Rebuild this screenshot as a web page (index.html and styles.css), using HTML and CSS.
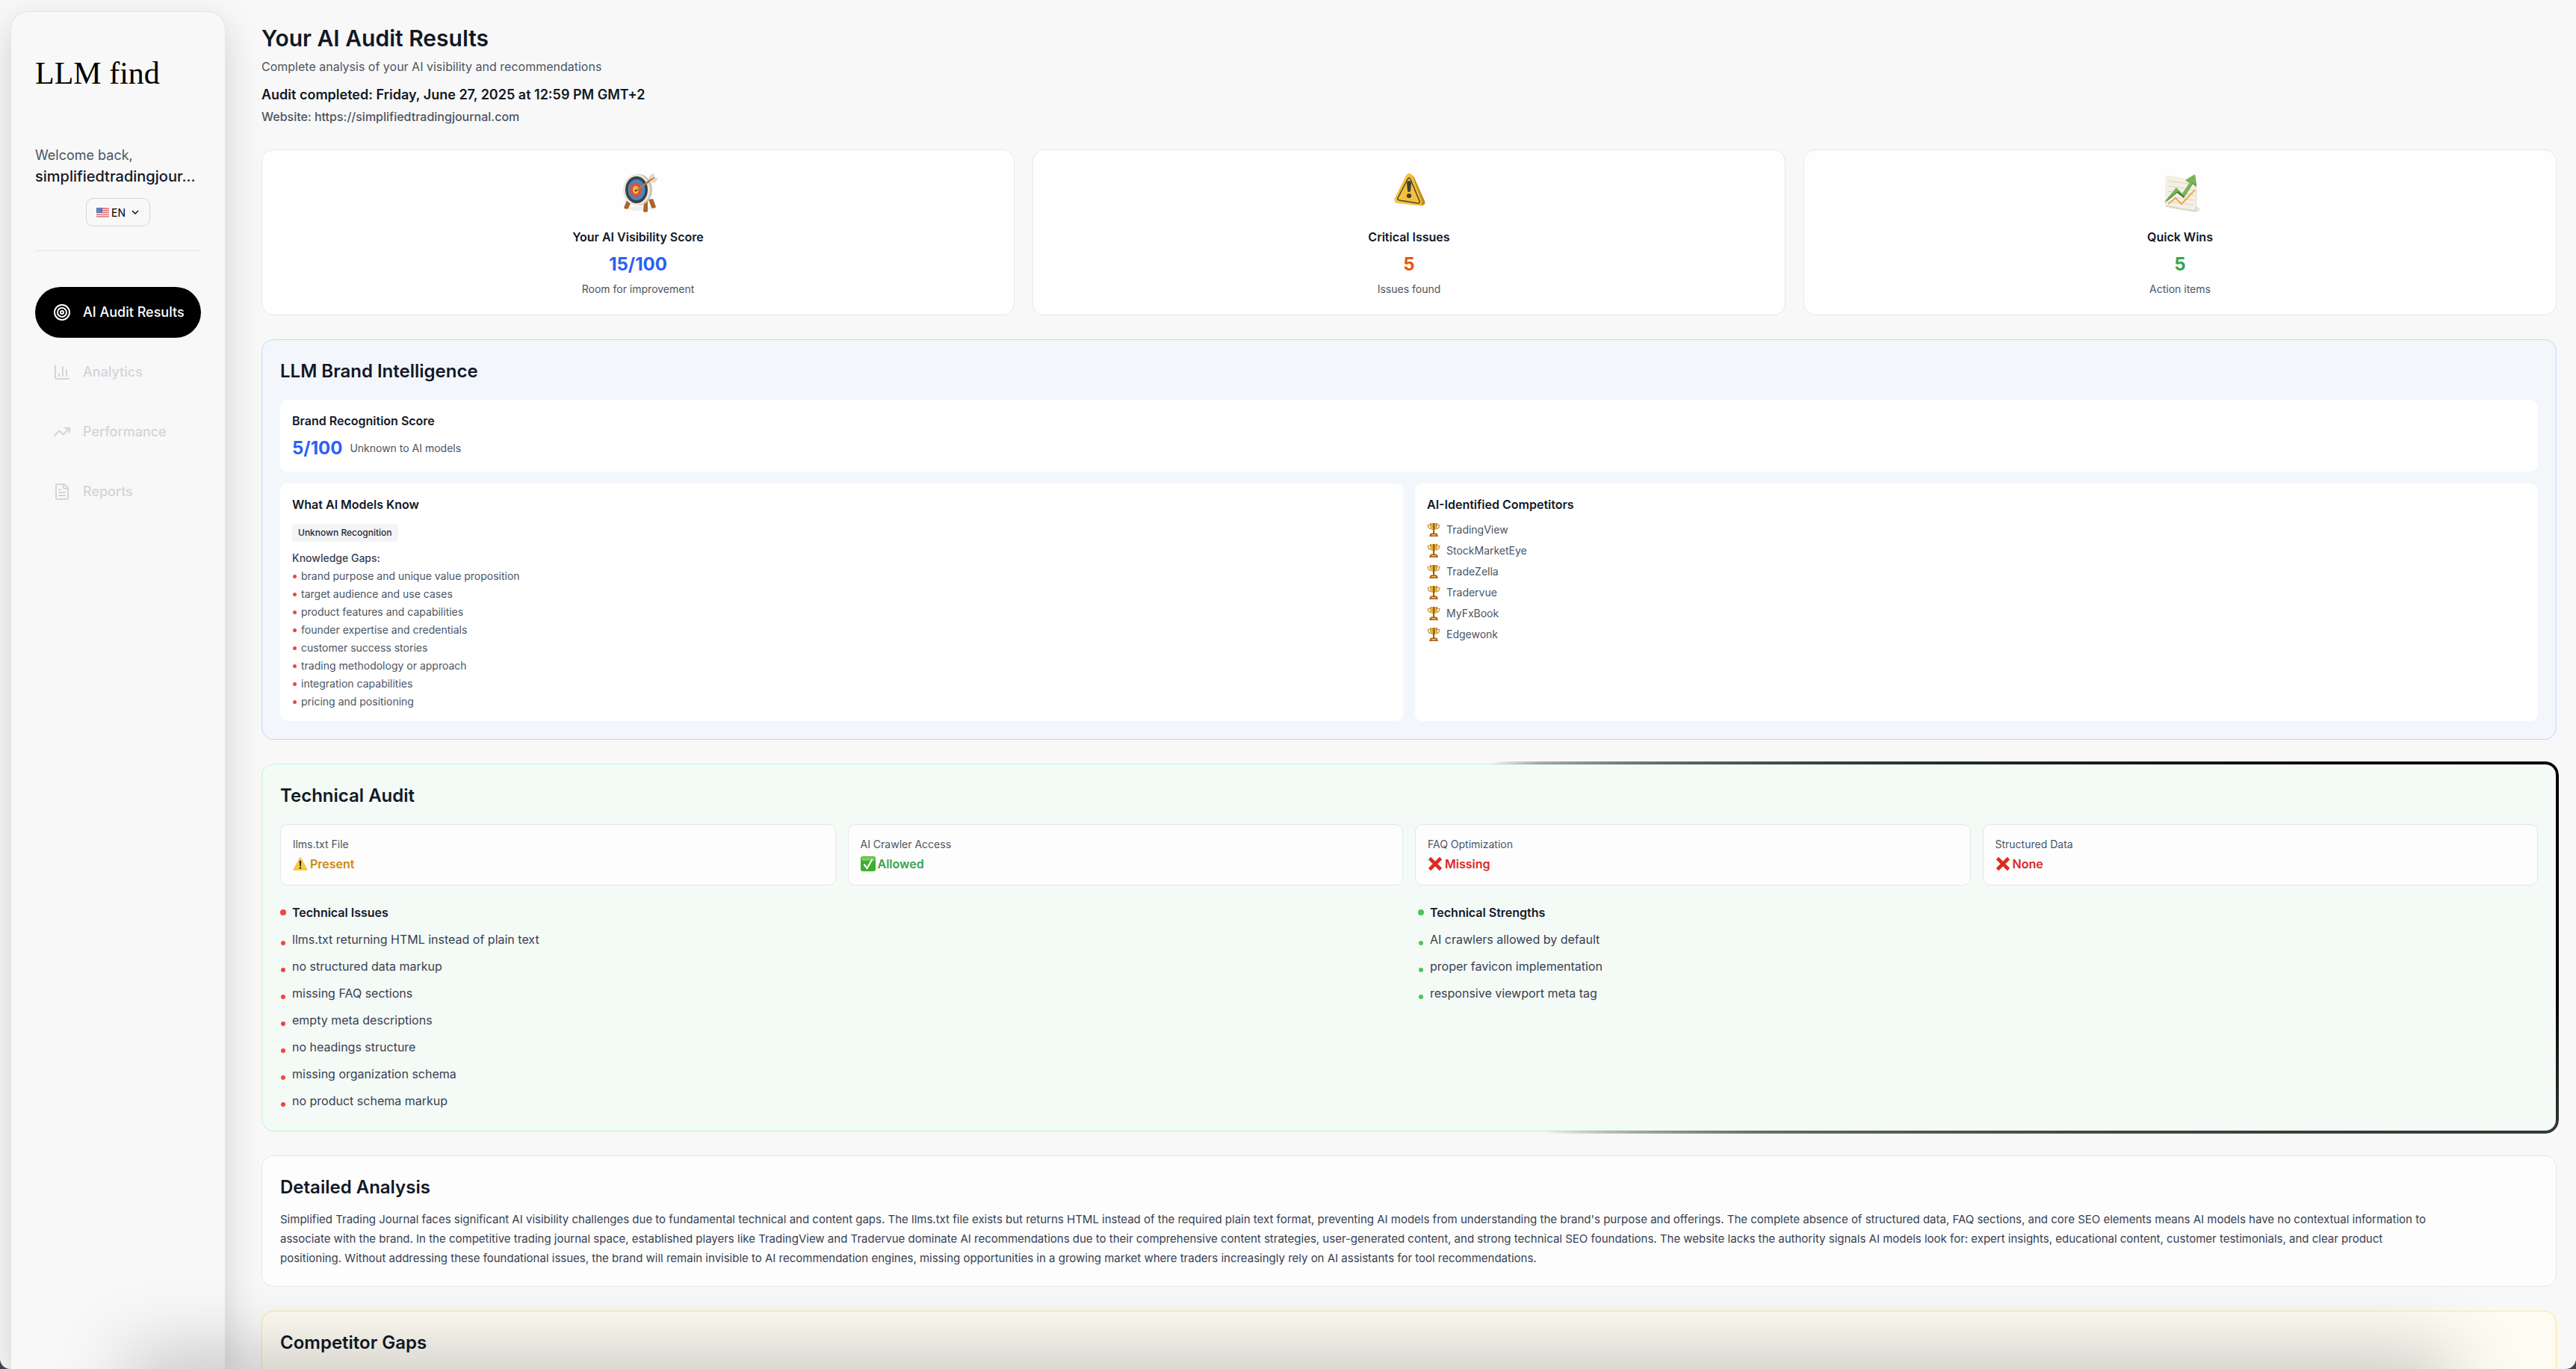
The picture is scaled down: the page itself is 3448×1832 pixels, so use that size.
FILE: index.html
```html
<!DOCTYPE html>
<html lang="en">
<head>
    <meta charset="UTF-8">
    <meta name="viewport" content="width=device-width, initial-scale=1">
    <title>LLM find - AI Audit Results</title>
    <link rel="stylesheet" href="styles.css">
</head>
<body>
    <!-- shared drawings -->
    <svg class="sprite" aria-hidden="true">
        <defs>
            <linearGradient id="gold" x1="0" x2="1">
                <stop offset="0" stop-color="#b9770f"/>
                <stop offset=".3" stop-color="#f6cf58"/>
                <stop offset=".5" stop-color="#7a4a08"/>
                <stop offset=".75" stop-color="#f2bd3c"/>
                <stop offset="1" stop-color="#a8650c"/>
            </linearGradient>
            <linearGradient id="sign" x1="0" y1="0" x2="0" y2="1">
                <stop offset="0" stop-color="#f7d679"/>
                <stop offset="1" stop-color="#f9c626"/>
            </linearGradient>
        </defs>
        <symbol id="trophy" viewBox="0 0 18 18">
            <path d="M4.500 2.500H1.200C1.200 6 3 7.500 6.500 8M13.500 2.500h3.300C16.800 6 15 7.500 11.500 8" fill="none" stroke="#c8912c" stroke-width="1.200"/>
            <path d="M4 0h10c0 5-1 8-4 9.500V13h2.500l.5 2H5l.5-2H8V9.500C5 8 4 5 4 0z" fill="url(#gold)"/>
            <path d="M4.500 14h9l1.500 4H3z" fill="#a95f1c"/>
            <path d="M6 15h6v1.500H6z" fill="#f0c45a"/>
        </symbol>
        <symbol id="cross" viewBox="0 0 20 20">
            <path d="M2.500 2.500l15 15M17.500 2.500l-15 15" stroke="#dc2c20" stroke-width="4.600"/>
        </symbol>
    </svg>

    <aside class="sidebar">
        <div class="logo">LLM find</div>
        <div class="welcome">Welcome back,</div>
        <div class="username">simplifiedtradingjour...</div>
        <div class="language">
            <svg class="flag" viewBox="0 0 17 13" aria-hidden="true">
                <rect width="17" height="13" rx="1" fill="#f3e6e8"/>
                <path d="M0 1h17M0 3.700h17M0 6.400h17M0 9.100h17M0 11.800h17" stroke="#e2636b" stroke-width="1.300"/>
                <rect width="8" height="7" fill="#4a6fb5"/>
                <path d="M1 1.500h6M1 3.500h6M1 5.500h6" stroke="#c9d6ee" stroke-width=".7" stroke-dasharray="1 1"/>
            </svg>
            <select class="language-select" aria-label="Language">
                <option>EN</option>
            </select>
            <svg class="chevron" viewBox="0 0 24 24" aria-hidden="true"><path d="m4 8 8 8 8-8"/></svg>
        </div>
        <nav class="nav">
            <a class="nav-item active" href="#">
                <svg class="icon" viewBox="0 0 24 24"><circle cx="12" cy="12" r="10"/><circle cx="12" cy="12" r="6"/><circle cx="12" cy="12" r="2"/></svg>
                AI Audit Results
            </a>
            <a class="nav-item" href="#">
                <svg class="icon" viewBox="0 0 24 24"><path d="M3 3v16a2 2 0 0 0 2 2h16"/><path d="M18 17V9"/><path d="M13 17V5"/><path d="M8 17v-3"/></svg>
                Analytics
            </a>
            <a class="nav-item" href="#">
                <svg class="icon" viewBox="0 0 24 24"><path d="M22 7l-8.500 8.500-5-5L2 17"/><path d="M16 7h6v6"/></svg>
                Performance
            </a>
            <a class="nav-item" href="#">
                <svg class="icon" viewBox="0 0 24 24"><path d="M15 2H6a2 2 0 0 0-2 2v16a2 2 0 0 0 2 2h12a2 2 0 0 0 2-2V7Z"/><path d="M14 2v4a2 2 0 0 0 2 2h4"/><path d="M10 9H8"/><path d="M16 13H8"/><path d="M16 17H8"/></svg>
                Reports
            </a>
        </nav>
    </aside>

    <main class="main">
        <h1>Your AI Audit Results</h1>
        <p class="subtitle">Complete analysis of your AI visibility and recommendations</p>
        <p class="completed">Audit completed: Friday, June 27, 2025 at 12:59 PM GMT+2</p>
        <p class="website">Website: https://simplifiedtradingjournal.com</p>

        <div class="stats">
            <div class="stat">
                <svg class="stat-icon" viewBox="0 0 64 64" aria-hidden="true">
                    <g transform="translate(5 -4)">
                        <ellipse cx="30" cy="58" rx="17" ry="3" fill="#eeeeec"/>
                        <path d="M12 47l-4 10q2 3 6 1l4-9zM35 49l-1 13q3 2 6 0V48zM41 46l4 11q4 2 6-1l-4-11z" fill="#a8662c"/>
                        <ellipse cx="28" cy="33" rx="18" ry="21" fill="#c9c3b6"/>
                        <ellipse cx="25" cy="33" rx="18" ry="21" fill="#ece7dc"/>
                        <ellipse cx="25" cy="33" rx="15" ry="18" fill="#3b4247"/>
                        <ellipse cx="25" cy="33" rx="11.500" ry="14" fill="#4588c6"/>
                        <ellipse cx="24" cy="33" rx="8" ry="10" fill="#d9523e"/>
                        <ellipse cx="24" cy="33" rx="4" ry="5.500" fill="#f0be45"/>
                        <path d="M25 34l24-18" stroke="#bb7a36" stroke-width="2.500"/>
                        <path d="M41 19l2-6 6-2-1 6zM46 21l4-4 4 1-4 5-6 1z" fill="#ded9cf"/>
                        <circle cx="24" cy="34" r="1.500" fill="#6a4a1e"/>
                    </g>
                </svg>
                <h3>Your AI Visibility Score</h3>
                <div class="score blue">15/100</div>
                <p>Room for improvement</p>
            </div>
            <div class="stat">
                <svg class="stat-icon" viewBox="0 0 64 64" aria-hidden="true">
                    <path d="M34 8q4 2 6 7l13 29q2 6-5 6l-5-1z" fill="#c48b1a"/>
                    <path d="M33 7q-4 0-6 5L13 40q-2 6 4 7l27 3q7 0 5-6L37 12q-2-5-4-5z" fill="#f4c13c"/>
                    <path d="M32 13q-1 0-2 2L17 40q-1 2 2 3l25 4q3 0 2-3L34 15q-1-2-2-2z" fill="none" stroke="#4b4636" stroke-width="1.500"/>
                    <path d="M29 20q0-3 3-3t3 3l-1 11q-2 2-4 0z" fill="#3f3d38"/>
                    <ellipse cx="32" cy="37" rx="3.200" ry="3" fill="#3f3d38"/>
                </svg>
                <h3>Critical Issues</h3>
                <div class="score orange">5</div>
                <p>Issues found</p>
            </div>
            <div class="stat">
                <svg class="stat-icon" viewBox="0 0 64 64" aria-hidden="true">
                    <path d="M16 53l36 6q8-1 6-5l-5-4z" fill="#e6e4e1"/>
                    <path d="M15 10q-2-1-2 2l-1 37q0 3 3 3l36 6q3 0 3-3V19q0-3-3-3z" fill="#dcd6c5"/>
                    <path d="M15 10q-2-1-2 2l-1 35q0 3 3 3l35 6q3 0 3-3V19q0-3-3-3z" fill="#f4f0e4"/>
                    <path d="M16 17l34 5M16 24l34 5M16 31l34 5M16 38l34 5M16 45l34 4" stroke="#d8d3c4" stroke-width="1"/>
                    <path d="M16 48l10-8 8 8 18-19" fill="none" stroke="#efa94a" stroke-width="2"/>
                    <path d="M11 47l16-20 8 8 11-15-6-3 12-8 2 16-5-4-12 19-9-7z" fill="#3f7a33"/>
                    <path d="M11 45l16-19 8 8 10-15-6-3 13-8 1 15-4-3-11 18-9-7z" fill="#79b552"/>
                </svg>
                <h3>Quick Wins</h3>
                <div class="score green">5</div>
                <p>Action items</p>
            </div>
        </div>

        <section class="panel panel-blue">
            <h2>LLM Brand Intelligence</h2>
            <div class="box">
                <h3>Brand Recognition Score</h3>
                <div class="recognition">
                    <span class="score blue">5/100</span>
                    <span class="small">Unknown to AI models</span>
                </div>
            </div>
            <div class="box-row">
                <div class="box">
                    <h3>What AI Models Know</h3>
                    <div class="badge">Unknown Recognition</div>
                    <div class="gaps-title">Knowledge Gaps:</div>
                    <ul class="gaps">
                        <li>brand purpose and unique value proposition</li>
                        <li>target audience and use cases</li>
                        <li>product features and capabilities</li>
                        <li>founder expertise and credentials</li>
                        <li>customer success stories</li>
                        <li>trading methodology or approach</li>
                        <li>integration capabilities</li>
                        <li>pricing and positioning</li>
                    </ul>
                </div>
                <div class="box">
                    <h3>AI-Identified Competitors</h3>
                    <ul class="competitors">
                        <li><svg class="trophy"><use href="#trophy"/></svg>TradingView</li>
                        <li><svg class="trophy"><use href="#trophy"/></svg>StockMarketEye</li>
                        <li><svg class="trophy"><use href="#trophy"/></svg>TradeZella</li>
                        <li><svg class="trophy"><use href="#trophy"/></svg>Tradervue</li>
                        <li><svg class="trophy"><use href="#trophy"/></svg>MyFxBook</li>
                        <li><svg class="trophy"><use href="#trophy"/></svg>Edgewonk</li>
                    </ul>
                </div>
            </div>
        </section>

        <section class="panel panel-green">
            <h2>Technical Audit</h2>
            <div class="checks">
                <div class="check">
                    <div class="small">llms.txt File</div>
                    <div class="check-value yellow">
                        <svg class="mark" viewBox="0 0 20 20"><path d="M10 1.500L19 18H1z" fill="url(#sign)" stroke="#f3c544" stroke-width="1.500" stroke-linejoin="round"/><path d="M9 6h2l-.4 7H9.400z" fill="#222" stroke="#222" stroke-width=".6"/><circle cx="10" cy="15.500" r="1.200" fill="#222"/></svg>
                        Present
                    </div>
                </div>
                <div class="check">
                    <div class="small">AI Crawler Access</div>
                    <div class="check-value green">
                        <svg class="mark" viewBox="0 0 20 20"><rect width="20" height="20" rx="3" fill="#3fae2d"/><rect x="1" y="1" width="18" height="5" rx="2" fill="#74cf5c"/><path d="M4.500 10.500l4 5.500L15.500 4" fill="none" stroke="#fff" stroke-width="2.200"/></svg>
                        Allowed
                    </div>
                </div>
                <div class="check">
                    <div class="small">FAQ Optimization</div>
                    <div class="check-value red">
                        <svg class="mark"><use href="#cross"/></svg>
                        Missing
                    </div>
                </div>
                <div class="check">
                    <div class="small">Structured Data</div>
                    <div class="check-value red">
                        <svg class="mark"><use href="#cross"/></svg>
                        None
                    </div>
                </div>
            </div>
            <div class="findings">
                <div class="finding issues">
                    <h3>Technical Issues</h3>
                    <ul>
                        <li>llms.txt returning HTML instead of plain text</li>
                        <li>no structured data markup</li>
                        <li>missing FAQ sections</li>
                        <li>empty meta descriptions</li>
                        <li>no headings structure</li>
                        <li>missing organization schema</li>
                        <li>no product schema markup</li>
                    </ul>
                </div>
                <div class="finding strengths">
                    <h3>Technical Strengths</h3>
                    <ul>
                        <li>AI crawlers allowed by default</li>
                        <li>proper favicon implementation</li>
                        <li>responsive viewport meta tag</li>
                    </ul>
                </div>
            </div>
        </section>

        <section class="panel panel-plain">
            <h2>Detailed Analysis</h2>
            <p class="analysis">Simplified Trading Journal faces significant AI visibility challenges due to fundamental technical and content gaps. The llms.txt file exists but returns HTML instead of the required plain text format, preventing AI models from understanding the brand's purpose and offerings. The complete absence of structured data, FAQ sections, and core SEO elements means AI models have no contextual information to<br>
            associate with the brand. In the competitive trading journal space, established players like TradingView and Tradervue dominate AI recommendations due to their comprehensive content strategies, user-generated content, and strong technical SEO foundations. The website lacks the authority signals AI models look for: expert insights, educational content, customer testimonials, and clear product<br>
            positioning. Without addressing these foundational issues, the brand will remain invisible to AI recommendation engines, missing opportunities in a growing market where traders increasingly rely on AI assistants for tool recommendations.</p>
        </section>

        <section class="panel panel-yellow">
            <h2>Competitor Gaps</h2>
        </section>
    </main>
    <div class="bottom-shade"></div>
    <div class="corner"></div>
</body>
</html>
```

FILE: styles.css
```css
* {
    box-sizing: border-box;
}

body {
    margin: 0;
    height: 100vh;
    display: flex;
    overflow: hidden;
    background: #f8f8f8;
    font-family: Inter, "Liberation Sans", sans-serif;
    font-size: 16px;
    line-height: 24px;
    color: #111827;
}

h1, h2, h3, p, ul {
    margin: 0;
    padding: 0;
}

ul {
    list-style: none;
}

h1 {
    font-size: 30px;
    line-height: 36px;
    font-weight: 600;
}

h2 {
    font-size: 24px;
    line-height: 36px;
    font-weight: 600;
    margin-bottom: 20px;
}

h3 {
    font-size: 16px;
    font-weight: 600;
}

.sprite {
    position: absolute;
    width: 0;
    height: 0;
}

/* sidebar */
.sidebar {
    flex: none;
    width: 288px;
    margin: 15px 48px 0 14px;
    padding: 54px 32px 0;
    border: 1px solid #e5e5e5;
    border-bottom: 0;
    border-radius: 24px 24px 0 0;
    background: #f8f8f8;
    box-shadow: 0 16px 48px rgba(0, 0, 0, .16);
}

.logo {
    font-family: "Liberation Serif", serif;
    font-size: 42px;
    line-height: 56px;
    color: #000;
    margin-bottom: 68px;
}

.welcome,
.username {
    line-height: 28px;
    white-space: nowrap;
}

.welcome {
    font-size: 18px;
    color: #4b5563;
}

.username {
    font-size: 20px;
    font-weight: 500;
}

.language {
    width: 86px;
    height: 38px;
    margin: 15px auto 32px;
    padding: 0 13px;
    display: flex;
    align-items: center;
    gap: 3px;
    border: 1px solid #d1d5db;
    border-radius: 10px;
}

.flag {
    flex: none;
    width: 17px;
    height: 13px;
}

.language-select {
    flex: 1;
    min-width: 0;
    padding: 0;
    border: 0;
    appearance: none;
    background: none;
    font-family: inherit;
    font-size: 14px;
    color: #000;
}

.chevron {
    flex: none;
    width: 12px;
    height: 12px;
    fill: none;
    stroke: #111;
    stroke-width: 3;
}

.nav {
    display: flex;
    flex-direction: column;
    gap: 12px;
    padding-top: 48px;
    border-top: 1px solid #e5e7eb;
}

.nav-item {
    display: flex;
    align-items: center;
    gap: 16px;
    height: 68px;
    padding: 0 24px;
    border-radius: 34px;
    font-size: 18px;
    font-weight: 500;
    color: #d1d5db;
    text-decoration: none;
    white-space: nowrap;
}

.nav-item.active {
    background: #000;
    color: #fff;
}

.icon {
    flex: none;
    width: 24px;
    height: 24px;
    fill: none;
    stroke: currentColor;
    stroke-width: 2;
    stroke-linecap: round;
    stroke-linejoin: round;
}

/* main column */
.main {
    flex: 1;
    min-width: 0;
    padding: 33px 26px 0 0;
}

.subtitle {
    margin-top: 8px;
    color: #4b5563;
}

.completed {
    margin-top: 12px;
    font-size: 18px;
    line-height: 28px;
    font-weight: 600;
}

.website {
    margin: 3px 0 32px;
    font-weight: 500;
    color: #4b5563;
}

.stats {
    display: grid;
    grid-template-columns: repeat(3, 1fr);
    gap: 24px;
}

.stat {
    padding: 24px;
    border: 1px solid #e5e7eb;
    border-radius: 16px;
    background: #fefefe;
    text-align: center;
}

.stat-icon {
    display: block;
    width: 64px;
    height: 64px;
    margin: 0 auto 16px;
}

.stat .score {
    margin: 8px 0 6px;
}

.stat p,
.small {
    font-size: 14px;
    line-height: 20px;
    color: #4b5563;
}

.score {
    font-size: 24px;
    line-height: 34px;
    font-weight: 700;
}

.blue { color: #2b5ff6; }
.orange { color: #e8550c; }
.green { color: #36a44b; }
.yellow { color: #cb8a0a; }
.red { color: #dc2626; }

/* panels */
.panel {
    position: relative;
    margin-top: 32px;
    padding: 24px;
    border: 1px solid #e5e7eb;
    border-radius: 16px;
}

.panel-blue {
    background: #f3f6fb;
    border-color: #bfdbfe;
}

.panel-green {
    background: #f4faf6;
    border-color: #bbf7d0;
}

.panel-plain {
    background: #fdfdfd;
}

.panel-yellow {
    height: 240px;
    background: #fdfbf2;
    border-color: #fde68a;
}

/* dark light running round the right half of the border */
.panel-green::after {
    content: "";
    position: absolute;
    inset: -4px;
    padding: 4px;
    border-radius: 18px;
    background: conic-gradient(
        transparent 24deg,
        rgba(0, 0, 0, .3) 35deg,
        rgba(0, 0, 0, .68) 62deg,
        #000 82deg,
        #000 92deg,
        rgba(0, 0, 0, .78) 99deg,
        rgba(0, 0, 0, .55) 118deg,
        transparent 144deg
    );
    mask: linear-gradient(#000 0 0) content-box exclude, linear-gradient(#000 0 0);
    pointer-events: none;
}

.box {
    padding: 16px;
    border-radius: 10px;
    background: #fff;
}

.recognition {
    display: flex;
    align-items: center;
    gap: 10px;
    margin-top: 8px;
    margin-bottom: -2px;
}

.box-row {
    display: grid;
    grid-template-columns: 1fr 1fr;
    gap: 16px;
    margin-top: 16px;
}

.badge {
    width: fit-content;
    margin: 14px 0 12px;
    padding: 4px 8px;
    border-radius: 4px;
    background: #f3f4f6;
    font-size: 12px;
    line-height: 16px;
    font-weight: 500;
    color: #1f2937;
}

.gaps-title {
    font-size: 14px;
    line-height: 20px;
    font-weight: 500;
    color: #374151;
}

.gaps li {
    display: flex;
    align-items: center;
    gap: 6px;
    margin-top: 4px;
    padding-left: 1px;
    font-size: 14px;
    line-height: 20px;
    color: #4b5563;
}

.gaps li::before {
    content: "";
    width: 5px;
    height: 5px;
    border-radius: 50%;
    background: #ef4444;
}

.competitors {
    display: grid;
    gap: 8px;
    margin-top: 12px;
}

.competitors li {
    display: flex;
    align-items: center;
    gap: 8px;
    font-size: 14px;
    line-height: 20px;
    color: #4b5563;
}

.trophy {
    width: 18px;
    height: 18px;
}

/* technical audit */
.checks {
    display: grid;
    grid-template-columns: repeat(4, 1fr);
    gap: 16px;
}

.check {
    padding: 16px;
    border: 1px solid #e5e7eb;
    border-radius: 10px;
    background: #fdfdfd;
}

.check-value {
    display: flex;
    align-items: center;
    gap: 3px;
    margin-top: 4px;
    font-weight: 600;
}

.mark {
    width: 20px;
    height: 20px;
}

.findings {
    display: grid;
    grid-template-columns: 1fr 1fr;
    gap: 24px;
    margin-top: 24px;
    padding-bottom: 4px;
}

.finding h3,
.finding li {
    display: flex;
    align-items: center;
    gap: 8px;
}

.finding h3::before {
    content: "";
    width: 8px;
    height: 8px;
    border-radius: 50%;
    background: #ef4444;
}

.finding li {
    align-items: flex-start;
    gap: 9px;
    margin-top: 12px;
    padding-left: 1px;
    color: #374151;
}

.finding li::before {
    content: "";
    width: 6px;
    height: 6px;
    margin-top: 14px;
    border-radius: 50%;
    background: #ef4444;
}

.strengths h3::before,
.strengths li::before {
    background: #4ac462;
}

.panel-plain h2 {
    margin-bottom: 12px;
}

.analysis {
    font-size: 15px;
    line-height: 26px;
    color: #374151;
}

/* soft shade along the lower edge of the window */
.bottom-shade {
    position: fixed;
    left: 190px;
    right: 190px;
    bottom: -60px;
    height: 60px;
    box-shadow: 0 0 100px 20px rgba(0, 0, 0, .22);
    pointer-events: none;
}

.corner {
    position: fixed;
    inset: 0;
    border-radius: 0 0 14px 14px;
    box-shadow: 0 0 0 20px #3c4650;
    pointer-events: none;
}
```
